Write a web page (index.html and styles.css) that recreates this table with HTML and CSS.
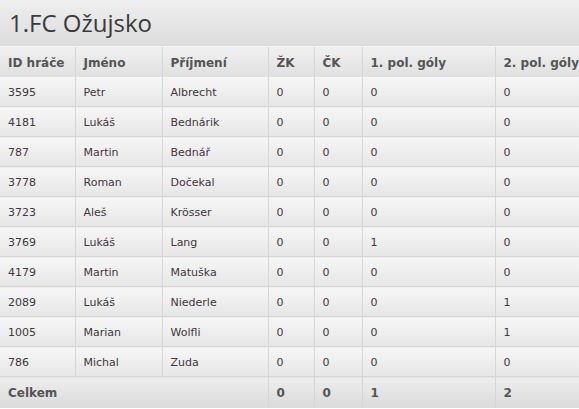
FILE: index.html
```html
<!DOCTYPE html>
<html lang="cs">
<head>
<meta charset="utf-8">
<title>1.FC Ožujsko</title>
<link rel="stylesheet" href="styles.css">
</head>
<body>
<div class="team">
  <h1 class="team-title">1.FC Ožujsko</h1>
  <table class="stats">
    <colgroup>
      <col class="c-id"><col class="c-name"><col class="c-surname"><col class="c-zk"><col class="c-ck"><col class="c-g1"><col class="c-g2">
    </colgroup>
    <thead>
      <tr><th>ID hráče</th><th>Jméno</th><th>Příjmení</th><th>ŽK</th><th>ČK</th><th>1. pol. góly</th><th>2. pol. góly</th></tr>
    </thead>
    <tbody>
      <tr><td>3595</td><td>Petr</td><td>Albrecht</td><td>0</td><td>0</td><td>0</td><td>0</td></tr>
      <tr><td>4181</td><td>Lukáš</td><td>Bednárik</td><td>0</td><td>0</td><td>0</td><td>0</td></tr>
      <tr><td>787</td><td>Martin</td><td>Bednář</td><td>0</td><td>0</td><td>0</td><td>0</td></tr>
      <tr><td>3778</td><td>Roman</td><td>Dočekal</td><td>0</td><td>0</td><td>0</td><td>0</td></tr>
      <tr><td>3723</td><td>Aleš</td><td>Krösser</td><td>0</td><td>0</td><td>0</td><td>0</td></tr>
      <tr><td>3769</td><td>Lukáš</td><td>Lang</td><td>0</td><td>0</td><td>1</td><td>0</td></tr>
      <tr><td>4179</td><td>Martin</td><td>Matuška</td><td>0</td><td>0</td><td>0</td><td>0</td></tr>
      <tr><td>2089</td><td>Lukáš</td><td>Niederle</td><td>0</td><td>0</td><td>0</td><td>1</td></tr>
      <tr><td>1005</td><td>Marian</td><td>Wolfli</td><td>0</td><td>0</td><td>0</td><td>1</td></tr>
      <tr><td>786</td><td>Michal</td><td>Zuda</td><td>0</td><td>0</td><td>0</td><td>0</td></tr>
    </tbody>
    <tfoot>
      <tr><td colspan="3">Celkem</td><td>0</td><td>0</td><td>1</td><td>2</td></tr>
    </tfoot>
  </table>
</div>
</body>
</html>
```
FILE: styles.css
```css
html, body {
  margin: 0;
  padding: 0;
  background: #ffffff;
  overflow: hidden;
}
.team {
  width: 579px;
  font-family: "DejaVu Sans", Verdana, sans-serif;
}
.team-title {
  margin: 0;
  height: 47px;
  box-sizing: border-box;
  padding: 8px 0 0 9px;
  font-family: "Open Sans", "Segoe UI", sans-serif;
  font-weight: 400;
  font-size: 24px;
  line-height: 30px;
  color: #3a3a3a;
  background: linear-gradient(#efefef, #dcdcdc);
  border-bottom: 1px solid #f6f6f6;
}
.stats {
  border-collapse: collapse;
  table-layout: fixed;
  width: 579px;
}
.c-id { width: 75px; }
.c-name { width: 87px; }
.c-surname { width: 106px; }
.c-zk { width: 46px; }
.c-ck { width: 48px; }
.c-g1 { width: 133px; }
.c-g2 { width: 84px; }
.stats th, .stats td {
  text-align: left;
  padding: 1px 0 0 8px;
  height: 28px;
  border-left: 1px solid #d6d6d6;
  border-bottom: 1px solid #d6d6d6;
  white-space: nowrap;
  overflow: hidden;
}
.stats th:first-child, .stats td:first-child {
  border-left: none;
}
.stats thead th {
  font-size: 12px;
  font-weight: 700;
  color: #555;
  background: linear-gradient(#f0f0f0, #e0e0e0);
  border-bottom: none;
  height: 29px;
}
.stats tbody td {
  font-size: 11px;
  color: #45353f;
  background: linear-gradient(#f6f6f6, #e6e6e6);
}
.stats tfoot td {
  font-size: 12px;
  font-weight: 700;
  color: #555;
  background: linear-gradient(#eeeeee, #dadada);
  border-bottom: none;
  height: 30px;
}
```
